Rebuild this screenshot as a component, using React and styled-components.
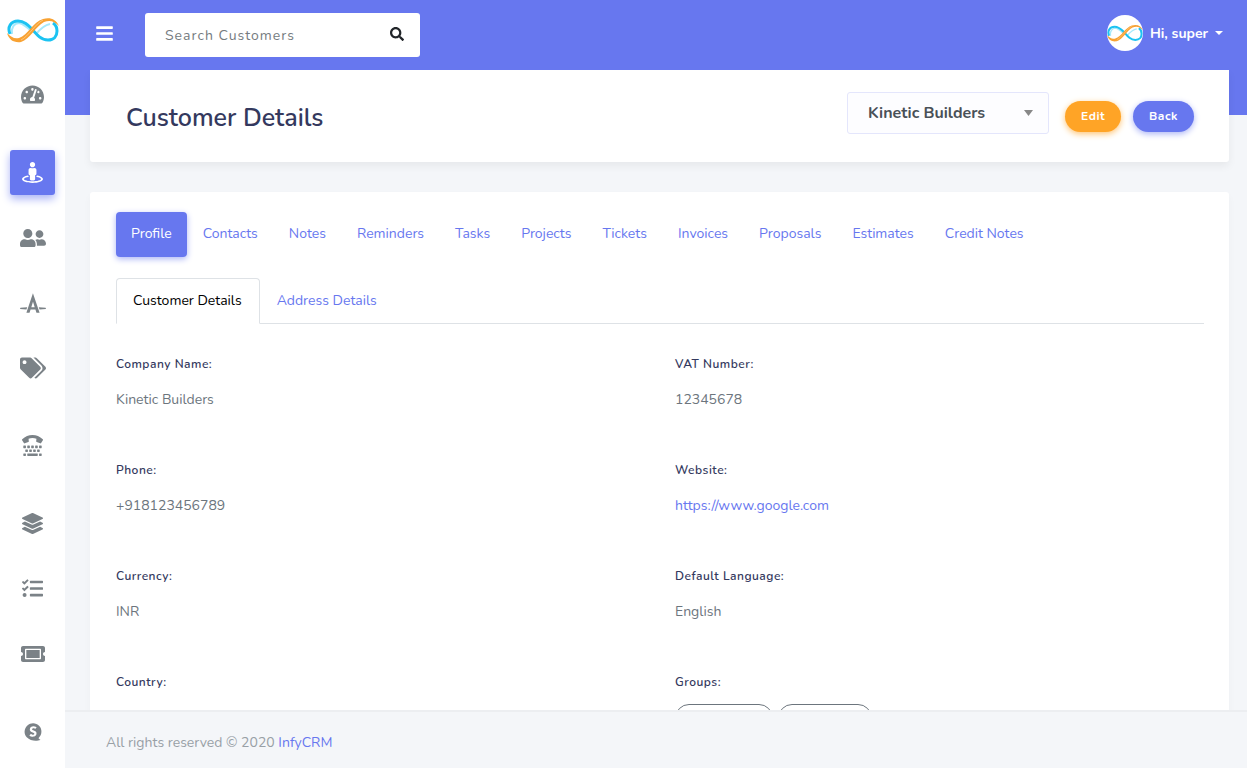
import React, { useState } from "react"
import styled, { createGlobalStyle } from "styled-components"
import {
  FaAutoprefixer,
  FaBars,
  FaLayerGroup,
  FaSearch,
  FaSpeakap,
  FaStreetView,
  FaTachometerAlt,
  FaTags,
  FaTasks,
  FaTicketAlt,
  FaTty,
  FaUserFriends
} from "react-icons/fa"

const GlobalStyle = createGlobalStyle`
  *, *::before, *::after {
    box-sizing: border-box;
  }

  body {
    margin: 0;
    background: #f4f6f9;
    color: #6c757d;
    font-family: Nunito, Lato, "Open Sans", sans-serif;
    font-size: 14px;
    line-height: 24px;
  }

  button, input, select {
    font-family: inherit;
  }

  a {
    color: #6777ef;
    text-decoration: none;
  }
`

const Page = styled.div`
  display: flex;
  height: 100vh;
`

const Sidebar = styled.aside`
  flex: 0 0 65px;
  display: flex;
  flex-direction: column;
  align-items: center;
  background: #fff;
  overflow: hidden;
`

const Brand = styled.a`
  display: flex;
  align-items: center;
  height: 60px;
  margin-bottom: 12px;
`

const Menu = styled.nav`
  display: flex;
  flex-direction: column;
  gap: 33px;
`

const MenuGroup = styled.div`
  display: flex;
  flex-direction: column;
  gap: 20px;
`

const MenuLink = styled.a`
  display: flex;
  align-items: center;
  justify-content: center;
  width: 45px;
  height: 45px;
  border-radius: 3px;
  font-size: ${props => props.$size || 21}px;
  color: ${props => props.$active ? "#fff" : "#7b8287"};
  background: ${props => props.$active ? "#6777ef" : "transparent"};
  box-shadow: ${props => props.$active ? "0 4px 8px #acb5f6" : "none"};
`

const Content = styled.div`
  flex: 1;
  min-width: 0;
  display: flex;
  flex-direction: column;
  background: linear-gradient(#6777ef 115px, #f4f6f9 115px);
`

const Navbar = styled.header`
  display: flex;
  align-items: center;
  height: 70px;
  padding: 0 24px 0 30px;
`

const IconButton = styled.button`
  display: flex;
  padding: 0 0 ${props => props.$dark ? 2 : 3}px;
  border: none;
  background: transparent;
  color: ${props => props.$dark ? "#212529" : "#fff"};
  font-size: ${props => props.$dark ? 14 : 19}px;
  cursor: pointer;
`

const SearchForm = styled.form`
  display: flex;
  align-items: center;
  width: 275px;
  height: 44px;
  margin-left: 31px;
  padding: 0 16px 0 20px;
  border-radius: 3px;
  background: #fff;
`

const SearchInput = styled.input`
  flex: 1;
  min-width: 0;
  padding: 0;
  border: none;
  outline: none;
  background: transparent;
  color: #6c757d;
  font-size: 14px;
  letter-spacing: 1px;

  &::placeholder {
    color: #757b80;
  }
`

const UserMenu = styled.button`
  display: flex;
  align-items: center;
  gap: 7px;
  margin-left: auto;
  padding: 0 0 4px;
  border: none;
  background: transparent;
  color: #fff;
  font-size: 14px;
  font-weight: 700;
  cursor: pointer;
`

const Avatar = styled.span`
  display: flex;
  align-items: center;
  justify-content: center;
  width: 36px;
  height: 36px;
  border-radius: 50%;
  background: #fff;
  overflow: hidden;
`

const Main = styled.main`
  flex: 1;
  min-height: 0;
  padding: 0 18px 0 25px;
  overflow-y: auto;
  scrollbar-width: none;
`

const PageHeader = styled.section`
  display: flex;
  align-items: center;
  min-height: 92px;
  margin-bottom: 30px;
  padding: 0 35px 0 36px;
  border-radius: 0 0 3px 3px;
  background: #fff;
  box-shadow: 0 4px 8px rgba(0, 0, 0, 0.06);
`

const Title = styled.h1`
  margin: 4px 0 0;
  color: #34395e;
  font-size: 25px;
  font-weight: 600;
`

const SelectBox = styled.div`
  display: grid;
  align-items: center;
  width: 202px;
  margin: 0 16px 6px auto;

  > * {
    grid-area: 1 / 1;
  }

  svg {
    justify-self: end;
    margin-right: 16px;
    pointer-events: none;
  }
`

const Select = styled.select`
  appearance: none;
  width: 100%;
  height: 42px;
  padding: 0 30px 0 20px;
  border: 1px solid #e4e6fc;
  border-radius: 3px;
  background: #fdfdff;
  color: #495057;
  font-size: 16px;
  font-weight: 700;
`

const PillButton = styled.button`
  height: 31px;
  margin-left: ${props => props.$spaced ? 12 : 0}px;
  padding: 0 16px;
  border: none;
  border-radius: 30px;
  background: ${props => props.$color};
  box-shadow: 0 2px 6px ${props => props.$shadow};
  color: #fff;
  font-size: 12px;
  font-weight: 700;
  letter-spacing: 0.5px;
  cursor: pointer;
`

const Card = styled.section`
  padding: 20px 25px 25px 26px;
  border-radius: 3px;
  background: #fff;
  box-shadow: 0 4px 8px rgba(0, 0, 0, 0.03);
`

const Pills = styled.div`
  display: flex;
  flex-wrap: wrap;
  gap: 1px;
  margin-bottom: 21px;
`

const Pill = styled.button`
  height: 45px;
  padding: 0 15px 2px;
  border: none;
  border-radius: 4px;
  background: ${props => props.$active ? "#6777ef" : "transparent"};
  box-shadow: ${props => props.$active ? "0 2px 6px #acb5f6" : "none"};
  color: ${props => props.$active ? "#fff" : "#6777ef"};
  font-size: 14px;
  cursor: pointer;
`

const Tabs = styled.div`
  display: flex;
  margin-bottom: 28px;
  border-bottom: 1px solid #dee2e6;
`

const Tab = styled.button`
  height: 46px;
  margin-bottom: -1px;
  padding: 0 17px 2px 16px;
  border: 1px solid ${props => props.$active ? "#dee2e6" : "transparent"};
  border-bottom-color: ${props => props.$active ? "#fff" : "transparent"};
  border-radius: 4px 4px 0 0;
  background: ${props => props.$active ? "#fff" : "transparent"};
  color: ${props => props.$active ? "#000" : "#6777ef"};
  font-size: 14px;
  cursor: pointer;
`

const Details = styled.dl`
  display: grid;
  grid-template-columns: 1fr 1fr;
  column-gap: 30px;
  margin: 0;
`

const Field = styled.div`
  min-height: 106px;
`

const FieldName = styled.dt`
  margin-bottom: 12px;
  color: #34395e;
  font-size: 12px;
  font-weight: 600;
  letter-spacing: 0.5px;
`

const FieldValue = styled.dd`
  display: flex;
  align-items: center;
  gap: 5px;
  height: 24px;
  margin: 0;
`

const Badge = styled.span`
  padding: 1px 14px;
  border: 1px solid #6c757d;
  border-radius: 30px;
  font-size: 12px;
`

const Footer = styled.footer`
  height: 58px;
  padding: 19px 41px;
  border-top: 2px solid #eceef1;
  background: #f4f6f9;
  color: #98a0a6;
`

const menu = [
  [{ name: "Dashboard", icon: FaTachometerAlt, size: 23 }],
  [
    { name: "Customers", icon: FaStreetView },
    { name: "Members", icon: FaUserFriends, size: 26 },
    { name: "Articles", icon: FaAutoprefixer, size: 26 },
    { name: "Tags", icon: FaTags, size: 26 }
  ],
  [{ name: "Leads", icon: FaTty }],
  [
    { name: "Projects", icon: FaLayerGroup },
    { name: "Tasks", icon: FaTasks },
    { name: "Tickets", icon: FaTicketAlt, size: 24 }
  ],
  [{ name: "Services", icon: FaSpeakap, size: 20 }]
]

const sections = [
  "Profile", "Contacts", "Notes", "Reminders", "Tasks", "Projects",
  "Tickets", "Invoices", "Proposals", "Estimates", "Credit Notes"
]

const fields = [
  { name: "Company Name:", value: "Kinetic Builders" },
  { name: "VAT Number:", value: "12345678" },
  { name: "Phone:", value: "+918123456789" },
  { name: "Website:", value: <a href="https://www.google.com">https://www.google.com</a> },
  { name: "Currency:", value: "INR" },
  { name: "Default Language:", value: "English" },
  { name: "Country:", value: "" }
]

// Two crossing ribbons; the orange one passes over the blue one
const Logo = ({ width }) => (
  <svg width={width} viewBox="0 0 52 26" fill="none" aria-hidden="true">
    <path d="M5 17C4 11 7 6 12 6C17 7 20 10 24 14M29 17C34 11 38 8 43 7" stroke="#a5e9fb" strokeWidth="2" />
    <path d="M3 17C0 10 4 4 11 4C17 4 21 8 25 12C30 18 34 23 41 23C47 23 50 19 50 14C50 10 49 8 46 6" stroke="#1cc3f2" strokeWidth="3" />
    <path d="M0 16C2 23 7 26 14 25C23 22 29 9 37 5C43 3 47 4 52 9C49 2 43 0 36 2C26 5 21 18 12 21C7 22 4 20 0 16Z" fill="#f8a233" />
    <path d="M14 23C22 19 28 7 36 3" stroke="#ffc57a" strokeWidth="1" />
  </svg>
)

const Caret = ({ color, width, height }) => (
  <svg width={width} height={height} viewBox="0 0 10 6" preserveAspectRatio="none" fill={color} aria-hidden="true">
    <path d="M0 0H10L5 6Z" />
  </svg>
)

const App = () => {
  const [search, setSearch] = useState("")
  const [section, setSection] = useState("Profile")
  const [tab, setTab] = useState("Customer Details")

  return (
    <Page>
      <GlobalStyle />
      <Sidebar>
        <Brand href="#" aria-label="InfyCRM"><Logo width={52} /></Brand>
        <Menu>
          {menu.map((group, i) =>
            <MenuGroup key={i}>
              {group.map(({ name, icon: Icon, size }) =>
                <MenuLink key={name} href="#" aria-label={name} $size={size} $active={name === "Customers"}>
                  <Icon />
                </MenuLink>
              )}
            </MenuGroup>
          )}
        </Menu>
      </Sidebar>
      <Content>
        <Navbar>
          <IconButton aria-label="Menu"><FaBars /></IconButton>
          <SearchForm onSubmit={e => e.preventDefault()}>
            <SearchInput
              type="text"
              aria-label="Search Customers"
              placeholder="Search Customers"
              value={search}
              onChange={e => setSearch(e.target.value)}
            />
            <IconButton $dark aria-label="Search"><FaSearch /></IconButton>
          </SearchForm>
          <UserMenu>
            <Avatar><Logo width={36} /></Avatar>
            Hi, super
            <Caret color="#fff" width={8} height={4} />
          </UserMenu>
        </Navbar>
        <Main>
          <PageHeader>
            <Title>Customer Details</Title>
            <SelectBox>
              <Select aria-label="Customer">
                <option>Kinetic Builders</option>
              </Select>
              <Caret color="#888" width={9} height={6} />
            </SelectBox>
            <PillButton $color="#ffa426" $shadow="#ffc473">Edit</PillButton>
            <PillButton $spaced $color="#6777ef" $shadow="#acb5f6">Back</PillButton>
          </PageHeader>
          <Card>
            <Pills>
              {sections.map(name =>
                <Pill key={name} $active={name === section} onClick={() => setSection(name)}>{name}</Pill>
              )}
            </Pills>
            <Tabs>
              {["Customer Details", "Address Details"].map(name =>
                <Tab key={name} $active={name === tab} onClick={() => setTab(name)}>{name}</Tab>
              )}
            </Tabs>
            <Details>
              {fields.map(field =>
                <Field key={field.name}>
                  <FieldName>{field.name}</FieldName>
                  <FieldValue>{field.value}</FieldValue>
                </Field>
              )}
              <Field>
                <FieldName>Groups:</FieldName>
                <FieldValue>
                  <Badge>Construction</Badge>
                  <Badge>Engineering</Badge>
                </FieldValue>
              </Field>
            </Details>
          </Card>
        </Main>
        <Footer>All rights reserved © 2020 <a href="#">InfyCRM</a></Footer>
      </Content>
    </Page>
  )
}

export default App
